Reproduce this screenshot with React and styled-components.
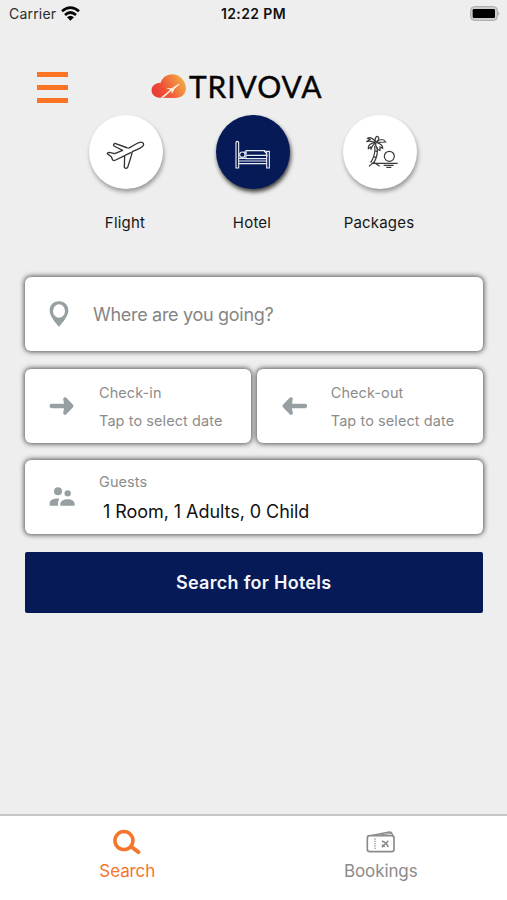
import React from "react";
import styled, { createGlobalStyle } from "styled-components";

const GlobalStyle = createGlobalStyle`
  * { box-sizing: border-box; }
  body { margin: 0; background: #eeeeee; }
  svg { display: block; flex: none; }
`;

const Screen = styled.main`
  width: 507px;
  height: 900px;
  display: flex;
  flex-direction: column;
  overflow: hidden;
  background: #eeeeee;
  font-family: Inter, "Liberation Sans", sans-serif;
  color: #161616;
`;

const StatusBar = styled.header`
  height: 28px;
  flex: none;
  display: grid;
  grid-template-columns: 1fr auto 1fr;
  align-items: center;
  padding: 0 6px 0 9px;
  font-size: 14px;
  line-height: 28px;
`;

const Carrier = styled.div`
  display: flex;
  align-items: center;
  gap: 5px;
  color: #2b2b2b;
  letter-spacing: 0.2px;

  svg { margin-bottom: 2px; }
`;

const Clock = styled.div`
  margin: 0 3px 0 0;
  font-weight: 600;
  font-size: 14px;
  letter-spacing: 0.4px;
  color: #111;
`;

const BatterySlot = styled.div`
  display: flex;
  justify-content: flex-end;
  padding-bottom: 2px;
`;

const TitleBar = styled.div`
  height: 87px;
  flex: none;
  display: flex;
  padding: 43px 37px 0;
`;

const MenuButton = styled.button`
  width: 32px;
  height: 32px;
  padding: 1px 0 0;
  border: 0;
  background: none;
  display: flex;
  flex-direction: column;
  justify-content: space-between;
`;

const MenuLine = styled.span`
  width: 31px;
  height: 5px;
  background: #fb7424;
`;

const Brand = styled.div`
  display: flex;
  align-items: flex-start;
  margin-left: 82px;
  padding-top: 3px;
`;

const BrandName = styled.span`
  margin: -2px 0 0 3px;
  font-family: Lato, "Liberation Sans", sans-serif;
  font-size: 30px;
  line-height: 28px;
  letter-spacing: 0.9px;
  color: #050505;
  -webkit-text-stroke: 0.4px #050505;
`;

const Categories = styled.nav`
  height: 162px;
  flex: none;
  display: flex;
  justify-content: center;
  padding-right: 1px;
`;

const Category = styled.div`
  width: 127px;
  display: flex;
  flex-direction: column;
  align-items: center;
`;

const Disc = styled.div`
  width: 74px;
  height: 74px;
  border-radius: 50%;
  display: flex;
  align-items: center;
  justify-content: center;
  padding: ${(p) => p.$inset || "0"};
  background: ${(p) => (p.$active ? "#061a57" : "#ffffff")};
  box-shadow: 1px 3px 4px ${(p) => (p.$active ? "rgba(0,0,0,.75)" : "rgba(0,0,0,.36)")};
`;

const CategoryLabel = styled.span`
  margin-top: 22px;
  padding-right: 2px;
  font-size: 15px;
  line-height: 24px;
  letter-spacing: 0.2px;
`;

const Form = styled.section`
  flex: 1;
  display: flex;
  flex-direction: column;
  gap: 17.5px;
  padding: 0 24.5px 0 25px;
`;

const DateRow = styled.div`
  display: grid;
  grid-template-columns: 1fr 1fr;
  gap: 6px;
`;

const Field = styled.div`
  height: 74px;
  flex: none;
  display: flex;
  align-items: center;
  padding-left: 24px;
  background: #fff;
  border-radius: 6px;
  box-shadow: 0 0 5px 1px rgba(0, 0, 0, 0.65);
`;

const FieldIcon = styled.div`
  width: ${(p) => p.$width || 50}px;
  color: #96a0a3;
`;

const Placeholder = styled.span`
  font-size: 18px;
  color: #858585;
  letter-spacing: -0.3px;
`;

const FieldText = styled.div`
  display: flex;
  flex-direction: column;
  padding-top: ${(p) => p.$drop || 0}px;
`;

const Caption = styled.span`
  font-size: 14.5px;
  line-height: 28px;
  color: #8c8c8c;
  letter-spacing: 0.08px;
`;

const GuestValue = styled.span`
  padding-left: 4px;
  font-size: 18px;
  line-height: 31px;
  color: #111;
  letter-spacing: -0.06px;
`;

const SearchButton = styled.button`
  height: 61px;
  flex: none;
  border: 0;
  border-radius: 2px;
  background: #061a57;
  color: #f4f6fb;
  font: 600 18px Inter, "Liberation Sans", sans-serif;
  letter-spacing: 0.28px;
`;

const TabBar = styled.footer`
  height: 86px;
  flex: none;
  display: grid;
  grid-template-columns: 1fr 1fr;
  border-top: 2px solid #c6c6c6;
  background: #fff;
`;

const Tab = styled.div`
  display: flex;
  flex-direction: column;
  align-items: center;
  padding: 10px 0 0 1px;
  color: ${(p) => (p.$active ? "#f5752b" : "#8b8b8b")};
`;

const TabIcon = styled.div`
  height: 32px;
  display: flex;
  align-items: center;
`;

const TabLabel = styled.span`
  font-size: 17px;
  line-height: 27px;
  letter-spacing: -0.1px;
`;

const WifiIcon = () => (
  <svg width="19" height="15" viewBox="0 0 57 45" fill="none" stroke="#050505" strokeWidth="8">
    <path d="M3 16Q28-6 54 16M12 27Q28 12 45 27" />
    <path d="M18 34Q28 25 39 34L28 44Z" fill="#050505" stroke="none" />
  </svg>
);

const BatteryIcon = () => (
  <svg width="31" height="15" viewBox="0 0 93 45">
    <rect x="2" y="2" width="80" height="41" rx="11" fill="#cfcfcf" stroke="#a6a6a6" strokeWidth="3" />
    <rect x="8" y="9" width="67" height="27" rx="4" fill="#000" />
    <path d="M85 17q7 5 0 12z" fill="#a6a6a6" />
  </svg>
);

const CloudLogo = () => (
  <svg width="35" height="25" viewBox="453 223 105 75">
    <defs>
      <linearGradient id="cloud" x1="0" x2="1" y1=".7" y2=".3">
        <stop offset="0" stopColor="#ea3a35" />
        <stop offset=".35" stopColor="#ef5338" />
        <stop offset=".75" stopColor="#f18c40" />
        <stop offset="1" stopColor="#f3b04d" />
      </linearGradient>
    </defs>
    <path d="M477 294C445 291 448 248 482 249C491 220 527 217 543 234C567 255 562 294 528 295Z" fill="url(#cloud)" />
    <path d="M482 294L511 270L498 265L515 266L536 252L539 254L524 267L516 282L514 273L490 294Z" fill="#ffeed8" />
  </svg>
);

const PlaneIcon = () => (
  <svg width="42" height="34" viewBox="105 100 126 102" fill="none" stroke="#333" strokeWidth="4" strokeLinejoin="round">
    <path d="M175 131L198 118Q215 108 220 116Q224 124 209 131L187 141L184 153L173 188Q168 194 163 188L164 153L137 166Q130 169 128 166L124 156L112 147Q112 143 118 143L134 147L158 137L132 124Q128 120 135 116L173 130" />
    <path d="M165 152L184 143" />
  </svg>
);

const BedIcon = () => (
  <svg width="36" height="30" viewBox="16 24 108 90" fill="none" stroke="#e8ecf6" strokeWidth="3.4">
    <path d="M19 31Q23 25 27 31V108H19ZM27 87H111M27 95H111M111 58H119V108H111ZM49 56H105L111 63V80H49Z" />
    <circle cx="38" cy="68" r="8" />
    <path d="M27 79H49M50 70H111M103 56Q112 62 112 74M44 58L50 64" />
  </svg>
);

const PalmIcon = () => (
  <svg width="34" height="34" viewBox="346 90 102 102" fill="none" stroke="#3a3a3a" strokeWidth="3.6">
    <path d="M378 112C371 98 360 96 354 100L361 103L350 110C360 106 369 109 377 113C363 114 354 121 356 131L363 126L364 134C366 124 372 117 378 114C377 125 383 136 391 136V126L399 130C400 121 393 116 380 112L408 111C402 101 392 101 380 111C390 103 390 96 382 94C376 98 375 104 378 112Z" />
    <path d="M375 122C378 140 373 157 363 173M382 126C386 145 379 162 373 173M374 137L383 140M371 155L380 158" />
    <path d="M358 184L372 172L390 184M372 175H444M402 181H432M410 187H425" />
    <circle cx="419" cy="154" r="15" />
  </svg>
);

const PinIcon = () => (
  <svg width="20" height="26" viewBox="0 0 60 78">
    <path fill="currentColor" fillRule="evenodd" d="M30 1C12 1 2 13 2 29C2 48 30 77 30 77S58 48 58 29C58 13 47 1 30 1ZM30 10A18 20 0 1 1 30 50A18 20 0 1 1 30 10" />
  </svg>
);

const ArrowIcon = ({ left }) => (
  <svg width="26" height="20" viewBox="0 0 78 60" fill="currentColor" stroke="currentColor" strokeLinecap="round" strokeLinejoin="round">
    {left ? <path d="M72 30H14" strokeWidth="13" /> : <path d="M8 30H64" strokeWidth="13" />}
    {left ? <path d="M30 9L10 30L30 51L26 30Z" strokeWidth="11" /> : <path d="M48 9L68 30L48 51L52 30Z" strokeWidth="11" />}
  </svg>
);

const GuestsIcon = () => (
  <svg width="26" height="20" viewBox="0 0 78 60" fill="currentColor">
    <circle cx="27" cy="13" r="12" />
    <circle cx="56" cy="19" r="9.5" />
    <path d="M2 56V49C2 38 17 34 31 35Q26 42 27 56ZM34 56V52C34 42 45 37 56 37C68 37 77 42 77 52V56Z" />
  </svg>
);

const SearchIcon = () => (
  <svg width="28" height="26" viewBox="101 86 87 79" fill="none" stroke="currentColor" strokeLinecap="round">
    <circle cx="135" cy="121" r="28" strokeWidth="11" />
    <path d="M159 141L180 157" strokeWidth="12" />
  </svg>
);

const TicketIcon = () => (
  <svg width="30" height="22" viewBox="108 92 90 66" fill="none" stroke="currentColor" strokeWidth="5" strokeLinejoin="round">
    <rect x="112" y="106" width="80" height="48" rx="7" />
    <path d="M125 105L178 95Q186 94 188 106" strokeWidth="4" />
    <path d="M148 104L184 99" strokeWidth="3" />
    <path d="M135 114V149" strokeWidth="3.5" strokeDasharray="4 3" />
    <path d="M156 141L175 121M156 122L168 128L175 140M156 133L164 140" strokeWidth="4.5" />
  </svg>
);

export default function App() {
  return (
    <Screen>
      <GlobalStyle />
      <StatusBar>
        <Carrier>Carrier <WifiIcon /></Carrier>
        <Clock>12:22 PM</Clock>
        <BatterySlot><BatteryIcon /></BatterySlot>
      </StatusBar>
      <TitleBar>
        <MenuButton aria-label="Menu"><MenuLine /><MenuLine /><MenuLine /></MenuButton>
        <Brand><CloudLogo /><BrandName>TRIVOVA</BrandName></Brand>
      </TitleBar>
      <Categories>
        <Category><Disc $inset="6px 0 0"><PlaneIcon /></Disc><CategoryLabel>Flight</CategoryLabel></Category>
        <Category><Disc $active $inset="5px 0 0"><BedIcon /></Disc><CategoryLabel>Hotel</CategoryLabel></Category>
        <Category><Disc $inset="0 0 0 4px"><PalmIcon /></Disc><CategoryLabel>Packages</CategoryLabel></Category>
      </Categories>
      <Form>
        <Field>
          <FieldIcon $width={44}><PinIcon /></FieldIcon>
          <Placeholder>Where are you going?</Placeholder>
        </Field>
        <DateRow>
          <Field>
            <FieldIcon><ArrowIcon /></FieldIcon>
            <FieldText $drop={3}><Caption>Check-in</Caption><Caption>Tap to select date</Caption></FieldText>
          </Field>
          <Field>
            <FieldIcon><ArrowIcon left /></FieldIcon>
            <FieldText $drop={3}><Caption>Check-out</Caption><Caption>Tap to select date</Caption></FieldText>
          </Field>
        </DateRow>
        <Field>
          <FieldIcon><GuestsIcon /></FieldIcon>
          <FieldText><Caption>Guests</Caption><GuestValue>1 Room, 1 Adults, 0 Child</GuestValue></FieldText>
        </Field>
        <SearchButton>Search for Hotels</SearchButton>
      </Form>
      <TabBar>
        <Tab $active><TabIcon><SearchIcon /></TabIcon><TabLabel>Search</TabLabel></Tab>
        <Tab><TabIcon><TicketIcon /></TabIcon><TabLabel>Bookings</TabLabel></Tab>
      </TabBar>
    </Screen>
  );
}
